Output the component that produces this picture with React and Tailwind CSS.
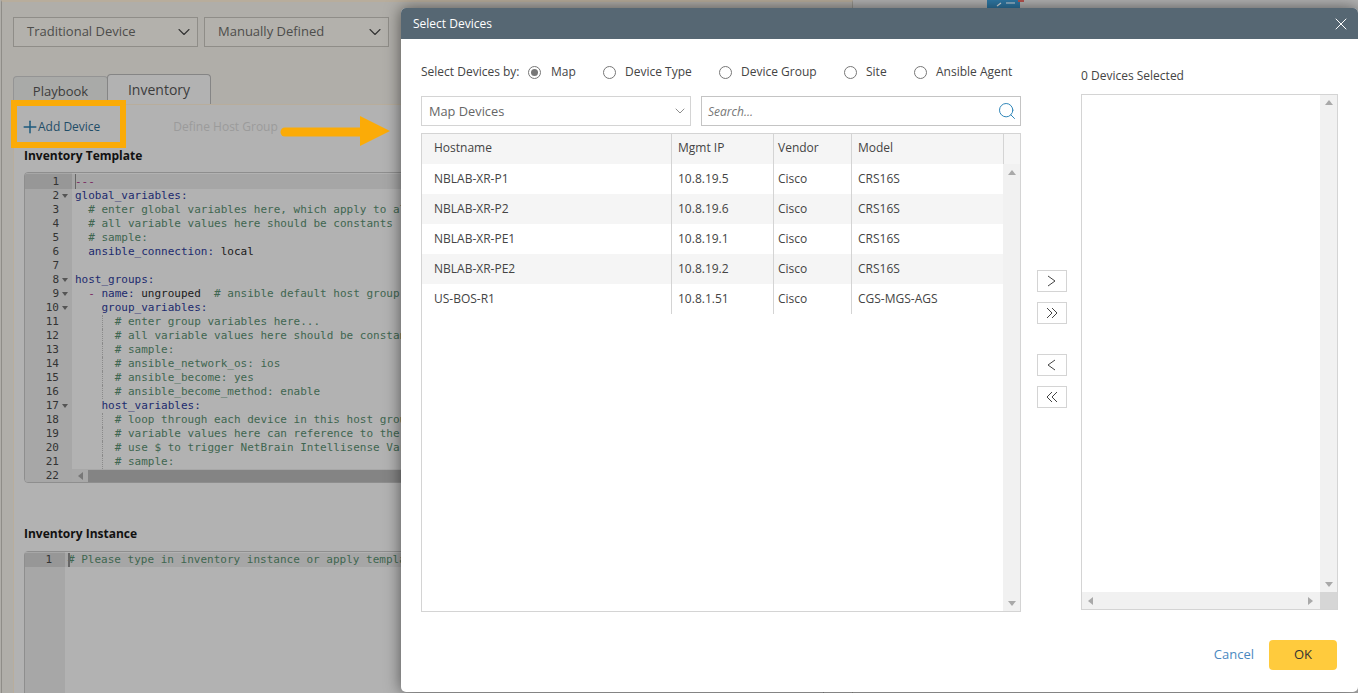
import React from "react";
import { ChevronDown, X, Search, Plus } from "lucide-react";

const templateLines = [
  { n: 1, active: true, parts: [["d", "---"]] },
  { n: 2, fold: true, parts: [["k", "global_variables:"]] },
  { n: 3, parts: [["c", "  # enter global variables here, which apply to al"]] },
  { n: 4, parts: [["c", "  # all variable values here should be constants ("]] },
  { n: 5, parts: [["c", "  # sample:"]] },
  { n: 6, parts: [["k", "  ansible_connection:"], ["p", " local"]] },
  { n: 7, parts: [["p", " "]] },
  { n: 8, fold: true, parts: [["k", "host_groups:"]] },
  { n: 9, fold: true, parts: [["d", "  - "], ["k", "name:"], ["p", " ungrouped"], ["c", "  # ansible default host group"]] },
  { n: 10, fold: true, parts: [["k", "    group_variables:"]] },
  { n: 11, guide: true, parts: [["c", "      # enter group variables here..."]] },
  { n: 12, guide: true, parts: [["c", "      # all variable values here should be constan"]] },
  { n: 13, guide: true, parts: [["c", "      # sample:"]] },
  { n: 14, guide: true, parts: [["c", "      # ansible_network_os: ios"]] },
  { n: 15, guide: true, parts: [["c", "      # ansible_become: yes"]] },
  { n: 16, guide: true, parts: [["c", "      # ansible_become_method: enable"]] },
  { n: 17, fold: true, parts: [["k", "    host_variables:"]] },
  { n: 18, guide: true, parts: [["c", "      # loop through each device in this host grou"]] },
  { n: 19, guide: true, parts: [["c", "      # variable values here can reference to the"]] },
  { n: 20, guide: true, parts: [["c", "      # use $ to trigger NetBrain Intellisense Var"]] },
  { n: 21, guide: true, parts: [["c", "      # sample:"]] },
];

const tokenColor = {
  d: "text-[#7a2a62]",
  k: "text-[#1c2a6e]",
  c: "text-[#3f6650]",
  p: "text-[#1a1a1a]",
};

const devices = [
  ["NBLAB-XR-P1", "10.8.19.5", "Cisco", "CRS16S"],
  ["NBLAB-XR-P2", "10.8.19.6", "Cisco", "CRS16S"],
  ["NBLAB-XR-PE1", "10.8.19.1", "Cisco", "CRS16S"],
  ["NBLAB-XR-PE2", "10.8.19.2", "Cisco", "CRS16S"],
  ["US-BOS-R1", "10.8.1.51", "Cisco", "CGS-MGS-AGS"],
];

const radios = [
  { label: "Map", width: "w-[75px]", checked: true },
  { label: "Device Type", width: "w-[116px]" },
  { label: "Device Group", width: "w-[125px]" },
  { label: "Site", width: "w-[70px]" },
  { label: "Ansible Agent", width: "" },
];

const Tri = ({ dir, className }) => {
  const pts = { up: "0,5 4,0 8,5", down: "0,0 8,0 4,5", left: "5,0 5,8 0,4", right: "0,0 0,8 5,4" };
  return (
    <svg width="8" height="8" viewBox="0 0 8 8" className={className}>
      <polygon points={pts[dir]} fill="#a9a9a9" />
    </svg>
  );
};

const PageSelect = ({ label }) => (
  <div className="w-[185px] h-[30px] border border-[#8f8d88] flex items-center justify-between pl-[13px] pr-[3px] text-[13px] text-[#4d4d4b] bg-[#b3b1ac]">
    {label}
    <ChevronDown size={20} strokeWidth={1.3} className="text-[#333]" />
  </div>
);

// arrows of the move buttons, drawn to the reference's thin chevrons
const moveIcons = {
  one: ["M2 1 L9 6 L2 11"],
  all: ["M1 1 L6 6 L1 11", "M6 1 L11 6 L6 11"],
  back: ["M9 1 L2 6 L9 11"],
  backAll: ["M6 1 L1 6 L6 11", "M11 1 L6 6 L11 11"],
};

const MoveButton = ({ kind }) => (
  <div className="w-[30px] h-[22px] border border-[#d4d4d4] bg-white flex items-center justify-center">
    <svg width="12" height="12" viewBox="0 0 12 12" fill="none" stroke="#444" strokeWidth="1">
      {moveIcons[kind].map((d) => (
        <path key={d} d={d} />
      ))}
    </svg>
  </div>
);

function TemplateEditor() {
  return (
    <div className="w-[800px] h-[311px] border border-[#8e8e8e] rounded-[4px] overflow-hidden font-['DejaVu_Sans_Mono',monospace] text-[11px] leading-[14px] bg-[#b2b2b2]">
      <div className="flex">
        <div className="w-[47px] shrink-0 bg-[#a7a7a7] text-[#333]">
          {templateLines.map((l) => (
            <div key={l.n} className={`flex items-center justify-end pr-[13px] relative ${l.active ? "bg-[#979797] mt-px pt-px h-[15px]" : "h-[14px]"}`}>
              {l.n}
              {l.fold && <span className="absolute right-[4px] top-[5px] w-0 h-0 border-x-[3px] border-x-transparent border-t-[4px] border-t-[#555]" />}
            </div>
          ))}
          <div className="h-[14px] flex items-center justify-end pr-[13px]">22</div>
        </div>
        <div className="flex-1">
          {templateLines.map((l) => (
            <div key={l.n} className={`pl-[3px] whitespace-pre relative ${l.active ? "bg-[#a6a6a6] mt-px pt-px h-[15px]" : "h-[14px]"}`}>
              {l.active && <span className="absolute left-[3px] top-0 h-full w-px bg-[#666]" />}
              {l.guide && <span className="absolute left-[30px] top-0 h-[14px] border-l border-dotted border-[#8a8a8a]" />}
              {l.parts.map(([t, s], i) => (
                <span key={i} className={tokenColor[t]}>{s}</span>
              ))}
            </div>
          ))}
          <div className="h-[14px] bg-[#a8a8a8] flex items-center">
            <span className="w-[16px] flex items-center justify-center">
              <span className="w-0 h-0 border-y-[4px] border-y-transparent border-r-[5px] border-r-[#777]" />
            </span>
            <div className="flex-1 h-[12px] bg-[#848484]" />
          </div>
        </div>
      </div>
    </div>
  );
}

function BackgroundPage() {
  return (
    <div className="flex h-full bg-[#b0aea9] font-['Open_Sans',sans-serif]">
      <div className="w-[852px] ml-px shrink-0 h-full border-l border-l-[#8f8d88] border-r border-r-[#98968f] border-t-2 border-t-[#b8ad9c] pl-[11px] pt-[15px] relative">
        <div className="flex gap-[6px]">
          <PageSelect label="Traditional Device" />
          <PageSelect label="Manually Defined" />
        </div>
        <div className="flex items-end mt-[27px] h-[30px]">
          <div className="w-[95px] h-[28px] border border-[#949494] border-b-0 rounded-t-[4px] bg-[#a9aaa8] text-[13px] text-[#3c3c3c] flex items-center justify-center pt-[2px]">Playbook</div>
          <div className="w-[104px] h-[30px] -ml-px border border-[#858585] border-b-0 rounded-t-[4px] bg-[#b2b2b2] text-[14px] text-[#3c3c3c] flex items-center justify-center">Inventory</div>
        </div>
        <div className="border-t border-l border-[#b8ad9c] bg-[#b2b2b2] h-[600px] pl-[10px]">
          <div className="flex items-center h-[45px] text-[12px] pb-px">
            <Plus size={20} strokeWidth={1.8} className="text-[#1d5a7d] -ml-[4px] -mr-[2px] shrink-0" />
            <span className="text-[#1f4d68]">Add Device</span>
            <span className="text-[#9b9b9b] ml-[73px]">Define Host Group</span>
          </div>
          <div className="text-[12px] font-bold text-[#111] leading-[16px] -mt-[2px]">Inventory Template</div>
          <div className="mt-[8px]"><TemplateEditor /></div>
          <div className="text-[12px] font-bold text-[#111] leading-[16px] mt-[43px]">Inventory Instance</div>
          <div className="mt-[9px] w-[800px] h-[200px] border border-[#8e8e8e] rounded-t-[4px] flex font-['DejaVu_Sans_Mono',monospace] text-[11px] leading-[14px]">
            <div className="w-[40px] bg-[#a7a7a7] text-[#333]">
              <div className="h-[14px] mt-px bg-[#979797] pr-[13px] text-right">1</div>
            </div>
            <div className="flex-1">
              <div className="h-[14px] mt-px bg-[#a6a6a6] pl-[3px] text-[#3f6650] whitespace-pre relative">
                <span className="absolute left-[3px] top-0 h-full w-[2px] bg-[#666]" />
                # Please type in inventory instance or apply templa
              </div>
            </div>
          </div>
        </div>
      </div>
      <div className="flex-1 bg-[#b3b3b3]">
        <svg className="ml-[134px]" width="38" height="9" viewBox="0 0 38 9">
          <rect x="0" y="0" width="33" height="9" fill="#2f79a6" />
          <path d="M10 6 L14 3 M19 3 H28" stroke="#d8dde0" strokeWidth="1.2" />
          <rect x="31" y="0" width="6" height="2" fill="#b5524e" />
        </svg>
      </div>
    </div>
  );
}

function DeviceTable() {
  return (
    <div className="w-[600px] h-[479px] border border-[#d4d4d4] flex mt-[7px] relative bg-white">
      <div className="w-[581px] flex flex-col">
        <div className="flex h-[30px] bg-[#f5f5f5] items-center">
          <div className="w-[250px] pl-[12px] pb-[2px] border-r border-[#d4d4d4] h-full flex items-center">Hostname</div>
          <div className="w-[102px] pl-[6px] pb-[2px] border-r border-[#d4d4d4] h-full flex items-center">Mgmt IP</div>
          <div className="w-[78px] pl-[4px] pb-[2px] border-r border-[#d4d4d4] h-full flex items-center">Vendor</div>
          <div className="flex-1 pl-[6px] pb-[2px] h-full flex items-center">Model</div>
        </div>
        {devices.map((d, i) => (
          <div key={d[0]} className={`flex h-[30px] items-center ${i % 2 ? "bg-[#f5f5f5]" : "bg-white"}`}>
            <div className="w-[250px] pl-[12px] border-r border-[#d4d4d4] h-full flex items-center">{d[0]}</div>
            <div className="w-[102px] pl-[6px] border-r border-[#d4d4d4] h-full flex items-center">{d[1]}</div>
            <div className="w-[78px] pl-[4px] border-r border-[#d4d4d4] h-full flex items-center">{d[2]}</div>
            <div className="flex-1 pl-[6px] h-full flex items-center">{d[3]}</div>
          </div>
        ))}
      </div>
      <div className="flex-1 flex flex-col">
        <div className="h-[30px] bg-[#f5f5f5] border-l border-[#d4d4d4]" />
        <div className="flex-1 bg-[#f1f1f1] flex flex-col justify-between items-center pt-[6px] pb-[2px]">
          <Tri dir="up" />
          <Tri dir="down" />
        </div>
      </div>
    </div>
  );
}

function SelectDevicesModal() {
  return (
    <div className="absolute left-[401px] top-[8px] w-[957px] h-[684px] bg-white rounded-[5px] shadow-[0_0_16px_rgba(0,0,0,0.55)] flex flex-col font-['Open_Sans',sans-serif] text-[12px] text-[#444] overflow-hidden">
      <div className="h-[31px] shrink-0 bg-[#566773] flex items-center justify-between pl-[12px] pr-[7px] text-white">
        Select Devices
        <X size={20} strokeWidth={1.2} />
      </div>
      <div className="flex flex-1 pl-[20px] pr-[20px] pt-[26px]">
        <div className="w-[600px] shrink-0">
          <div className="flex items-center h-[14px]">
            <span className="w-[107px] shrink-0">Select Devices by:</span>
            {radios.map((r) => (
              <label key={r.label} className={`flex items-center gap-[9px] ${r.width}`}>
                <span className="w-[13px] h-[13px] rounded-full border border-[#777] flex items-center justify-center bg-white">
                  {r.checked && <span className="w-[7px] h-[7px] rounded-full bg-[#777]" />}
                </span>
                <span className={r.checked ? "ml-px" : ""}>{r.label}</span>
              </label>
            ))}
          </div>
          <div className="flex gap-[10px] mt-[17px]">
            <div className="w-[270px] h-[30px] border border-[#d4d4d4] flex items-center justify-between pl-[7px] pr-[2px] text-[12.8px] text-[#666]">
              <span className="pt-[2px]">Map Devices</span>
              <ChevronDown size={16} strokeWidth={1} className="text-[#555]" />
            </div>
            <div className="w-[320px] h-[30px] border border-[#c4c4c4] flex items-center justify-between pl-[6px] pr-[3px] italic text-[#777]">
              <span className="pt-[2px]">Search...</span>
              <Search size={20} strokeWidth={1.2} className="text-[#2f86b9]" />
            </div>
          </div>
          <DeviceTable />
        </div>
        <div className="w-[60px] shrink-0 flex flex-col items-center pl-[2px] pt-[205px]">
          <MoveButton kind="one" />
          <div className="mt-[10px]"><MoveButton kind="all" /></div>
          <div className="mt-[30px]"><MoveButton kind="back" /></div>
          <div className="mt-[10px]"><MoveButton kind="backAll" /></div>
        </div>
        <div className="flex-1">
          <div className="mt-[3px] h-[16px] flex items-center">0 Devices Selected</div>
          <div className="mt-[10px] w-[257px] h-[516px] border border-[#d4d4d4] flex flex-col">
            <div className="flex flex-1">
              <div className="flex-1" />
              <div className="w-[17px] bg-[#f1f1f1] flex flex-col justify-between items-center pt-[5px] pb-[2px]">
                <Tri dir="up" />
                <Tri dir="down" />
              </div>
            </div>
            <div className="h-[17px] flex bg-[#f1f1f1]">
              <div className="flex-1 flex items-center justify-between pl-[6px] pr-[4px]">
                <Tri dir="left" />
                <Tri dir="right" />
              </div>
              <div className="w-[17px] bg-[#d6d6d6]" />
            </div>
          </div>
        </div>
      </div>
      <div className="h-[52px] shrink-0 flex justify-end items-start pr-[21px] gap-[15px]">
        <span className="text-[13px] text-[#4a89bf] h-[30px] flex items-center">Cancel</span>
        <div className="w-[68px] h-[30px] rounded-[4px] bg-[#ffcb3d] text-[13px] text-[#333] flex items-center justify-center">OK</div>
      </div>
    </div>
  );
}

export default function App() {
  return (
    <div className="relative w-[1358px] h-[693px] overflow-hidden">
      <BackgroundPage />
      {/* annotation over the screenshot */}
      <div className="absolute left-[11px] top-[100px] w-[115px] h-[48px] border-[6px] border-[#fbab07]" />
      <svg className="absolute left-[280px] top-[115px]" width="112" height="32" viewBox="0 0 112 32">
        <path d="M5 17 H81" stroke="#fbab07" strokeWidth="9" strokeLinecap="round" />
        <polygon points="80,1 110,16 80,31" fill="#fbab07" />
      </svg>
      <SelectDevicesModal />
    </div>
  );
}
